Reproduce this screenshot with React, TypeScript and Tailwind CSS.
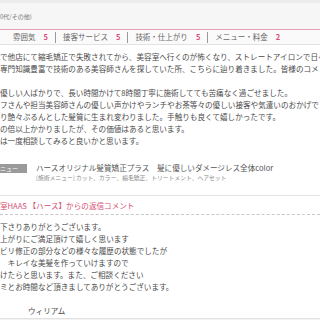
import * as React from 'react';

const ratings = [
  { label: '雰囲気', score: 5 },
  { label: '接客サービス', score: 5 },
  { label: '技術・仕上がり', score: 5 },
  { label: 'メニュー・料金', score: 2 },
];

const bodyLines = [
  'で他店にて縮毛矯正で失敗されてから、美容室へ行くのが怖くなり、ストレートアイロンで日々',
  '専門知識豊富で技術のある美容師さんを探していた所、こちらに辿り着きました。皆様のコメント',
  '',
  '優しい人ばかりで、長い時間かけて8時間丁寧に施術してても苦痛なく過ごせました。',
  'フさんや担当美容師さんの優しい声かけやランチやお茶等々の優しい接客や気遣いのおかげで',
  'り艶々ぷるんとした髪質に生まれ変わりました。手触りも良くて嬉しかったです。',
  'の倍以上かかりましたが、その価値はあると思います。',
  'は一度相談してみると良いかと思います。',
];

const replyLines = [
  '下さりありがとうございます。',
  '上がりにご満足頂けて嬉しく思います',
  'ビリ修正の部分などの様々な履歴の状態でしたが',
  '　キレイな美髪を作っていけますので',
  'けたらと思います。また、ご相談ください',
  'ミとお時間など頂きましてありがとうございます。',
];

function App() {
  return (
    <div className="w-[320px] h-[320px] overflow-hidden bg-white whitespace-nowrap font-['Noto_Sans_CJK_JP',sans-serif] text-[#555]">
      {/* reviewer info */}
      <div className="h-[3px] bg-[#ececec]" />
      <div className="h-[26px] bg-[#f6f6f6] flex items-center text-[6px] text-[#777]">0代/その他)</div>

      {/* ratings */}
      <div className="h-[16px] bg-[#fafafa] border-t border-[#e8a2b4] border-b border-b-[#e2e2e2] flex items-center pl-[13px] text-[7.5px] text-[#666]">
        {ratings.map((r, i) => (
          <React.Fragment key={r.label}>
            {i > 0 && <span className="mx-[7px] h-[11px] w-px bg-[#999]" />}
            <span>{r.label}</span>
            <span className="ml-[8px] font-bold text-[#dc4a78]">{r.score}</span>
          </React.Fragment>
        ))}
      </div>

      {/* review body */}
      <div className="pt-[6px] text-[7.6px] leading-[12px] text-[#4a4a4a]">
        {bodyLines.map((line, i) => (
          <div key={i} className="h-[12px]">{line}</div>
        ))}
      </div>

      {/* menu */}
      <div className="mt-[16px] flex items-start">
        <div className="w-[27px] h-[9px] mt-[1px] bg-[#9a9a9a] text-white text-[6px] leading-[9px]">ニュー</div>
        <div className="ml-[9px]">
          <div className="text-[7.6px] leading-[10px] text-[#555]">ハースオリジナル髪質矯正プラス　髪に優しいダメージレス全体color</div>
          <div className="text-[5.8px] leading-[10px] text-[#888]">[施術メニュー] カット、カラー、縮毛矯正、トリートメント、ヘアセット</div>
        </div>
      </div>

      {/* salon reply */}
      <div className="mt-[12px] border-t border-[#e4e4e4]">
        <div className="h-[18px] flex items-center pt-[2px] text-[7.6px] text-[#d4506f]">室HAAS 【ハース】からの返信コメント</div>
        <div className="border-t border-dashed border-[#c8c8c8]" />
        <div className="pt-[6px] text-[7.6px] leading-[12px] text-[#4a4a4a]">
          {replyLines.map((line, i) => (
            <div key={i} className="h-[12px]">{line}</div>
          ))}
          <div className="h-[12px]" />
          <div className="h-[12px] pl-[28px]">ウィリアム</div>
        </div>
        <div className="mt-[1px] h-[4px] bg-[#f2f2f2] border-t border-[#e2e2e2]" />
      </div>
    </div>
  );
}

export default App;
